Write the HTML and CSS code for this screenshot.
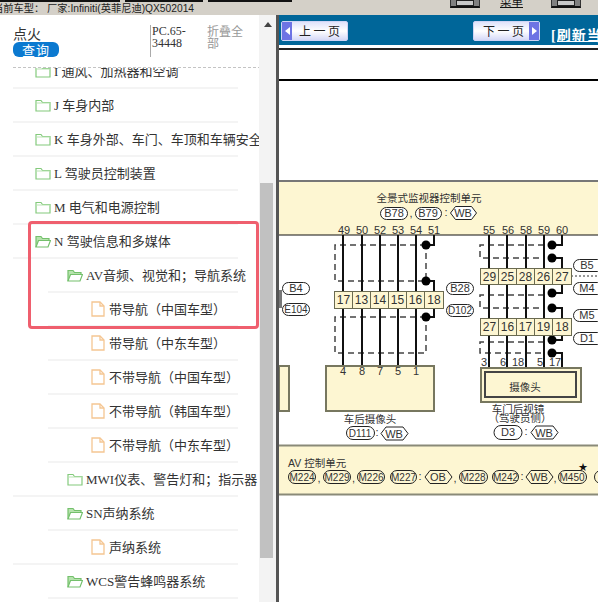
FILE: index.html
```html
<!DOCTYPE html>
<html lang="zh-CN">
<head>
    <meta charset="UTF-8">
    <meta name="viewport" content="width=device-width, initial-scale=1.0">
    <title>维修手册</title>
    <link rel="stylesheet" href="styles.css">
</head>
<body>
    <svg class="icon-defs" aria-hidden="true">
        <symbol id="folder-closed" viewBox="0 0 16 13">
            <path d="M1 12V1.500h5l1.500 2H15V12z" fill="#fff" stroke="#84ca7c" stroke-width="1.200"/>
            <path d="M1 4h14" stroke="#b9e3b2" stroke-width="1"/>
        </symbol>
        <symbol id="folder-open" viewBox="0 0 16 13">
            <path d="M1 12V1.500h5l1.500 2H14V6" fill="#b6e3ad" stroke="#74c06c" stroke-width="1.200"/>
            <path d="M1 12l2.500-6.500H15.500L13 12z" fill="#fff" stroke="#74c06c" stroke-width="1.200"/>
        </symbol>
        <symbol id="file" viewBox="0 0 14 16">
            <path d="M1 1h8l4 4v10H1z" fill="#fff" stroke="#f5c692" stroke-width="1.300"/>
            <path d="M9 1v4h4" fill="none" stroke="#f5c692" stroke-width="1.300"/>
        </symbol>
    </svg>

    <header class="toolbar">
        <div class="toolbar__left">
            <div class="toolbar__strips">
                <span class="strip strip--a"></span>
                <span class="strip strip--b"></span>
                <span class="strip strip--c"></span>
            </div>
            <div class="toolbar__status">当前车型： 厂家:Infiniti(英菲尼迪)QX502014</div>
        </div>
        <span class="tool-btn"></span>
        <span class="tool-label">菜单</span>
        <span class="tool-btn tool-btn--last"></span>
    </header>

    <main class="main">
        <aside class="sidebar">
            <div class="sidebar__content">
                <div class="search">
                    <div class="search__left">
                        <div class="search__name">点火</div>
                        <button class="search__btn">查询</button>
                    </div>
                    <div class="search__code">PC.65-34448</div>
                    <div class="search__fold">折叠全部</div>
                </div>
                <ul class="tree">
                    <li class="tree__row tree__row--l1"><svg class="tree__icon"><use href="#folder-closed"/></svg>I 通风、加热器和空调</li>
                    <li class="tree__row tree__row--l1"><svg class="tree__icon"><use href="#folder-closed"/></svg>J 车身内部</li>
                    <li class="tree__row tree__row--l1"><svg class="tree__icon"><use href="#folder-closed"/></svg>K 车身外部、车门、车顶和车辆安全</li>
                    <li class="tree__row tree__row--l1"><svg class="tree__icon"><use href="#folder-closed"/></svg>L 驾驶员控制装置</li>
                    <li class="tree__row tree__row--l1"><svg class="tree__icon"><use href="#folder-closed"/></svg>M 电气和电源控制</li>
                    <li class="tree__row tree__row--l1"><svg class="tree__icon"><use href="#folder-open"/></svg>N 驾驶信息和多媒体</li>
                    <li class="tree__row tree__row--l2 tree__row--short"><svg class="tree__icon"><use href="#folder-open"/></svg>AV音频、视觉和；导航系统</li>
                    <li class="tree__row tree__row--l3 tree__row--short"><svg class="tree__icon tree__icon--file"><use href="#file"/></svg>带导航（中国车型）</li>
                    <li class="tree__row tree__row--l3 tree__row--short"><svg class="tree__icon tree__icon--file"><use href="#file"/></svg>带导航（中东车型）</li>
                    <li class="tree__row tree__row--l3 tree__row--short"><svg class="tree__icon tree__icon--file"><use href="#file"/></svg>不带导航（中国车型）</li>
                    <li class="tree__row tree__row--l3 tree__row--short"><svg class="tree__icon tree__icon--file"><use href="#file"/></svg>不带导航（韩国车型）</li>
                    <li class="tree__row tree__row--l3 tree__row--short"><svg class="tree__icon tree__icon--file"><use href="#file"/></svg>不带导航（中东车型）</li>
                    <li class="tree__row tree__row--l2"><svg class="tree__icon"><use href="#folder-closed"/></svg>MWI仪表、警告灯和；指示器</li>
                    <li class="tree__row tree__row--l2 tree__row--short"><svg class="tree__icon"><use href="#folder-open"/></svg>SN声纳系统</li>
                    <li class="tree__row tree__row--l3"><svg class="tree__icon tree__icon--file"><use href="#file"/></svg>声纳系统</li>
                    <li class="tree__row tree__row--l2 tree__row--short"><svg class="tree__icon"><use href="#folder-open"/></svg>WCS警告蜂鸣器系统</li>
                </ul>
            </div>
            <div class="scrollbar">
                <span class="scrollbar__arrow"></span>
                <span class="scrollbar__thumb"></span>
            </div>
            <div class="highlight"></div>
        </aside>

        <section class="doc">
            <div class="doc__nav">
                <button class="page-btn page-btn--prev"><span class="page-btn__arrow page-btn__arrow--left"></span><span class="page-btn__text">上一页</span></button>
                <button class="page-btn page-btn--next"><span class="page-btn__text">下一页</span><span class="page-btn__arrow page-btn__arrow--right"></span></button>
                <a class="doc__refresh">[刷新当前页]</a>
            </div>
            <div class="doc__title"></div>

            <svg class="diagram" viewBox="279 81 319 521" width="319" height="521">
                <!-- 上部控制单元 -->
                <rect class="band" x="279" y="181" width="319" height="54"/>
                <path class="band-top" d="M279 181H598"/>
                <path class="band-line" d="M279 235H598"/>
                <text class="t t--cjk" x="429" y="202">全景式监视器控制单元</text>
                <rect class="pill" x="380.500" y="207.500" width="27" height="12" rx="6"/>
                <text class="t" x="394" y="217">B78</text>
                <text class="t" x="411" y="217">,</text>
                <rect class="pill" x="415.500" y="207.500" width="26" height="12" rx="6"/>
                <text class="t" x="428" y="217">B79</text>
                <text class="t" x="446" y="216">:</text>
                <path class="pill" d="M450.500 213l5-6.500h16l5 6.500-5 6.500h-16z"/>
                <text class="t" x="463" y="217">WB</text>

                <text class="t" x="344" y="234">49</text>
                <text class="t" x="362" y="234">50</text>
                <text class="t" x="380" y="234">52</text>
                <text class="t" x="398" y="234">53</text>
                <text class="t" x="416" y="234">54</text>
                <text class="t" x="434" y="234">51</text>
                <text class="t" x="489" y="234">55</text>
                <text class="t" x="508" y="234">56</text>
                <text class="t" x="526" y="234">58</text>
                <text class="t" x="544" y="234">59</text>
                <text class="t" x="562" y="234">60</text>

                <!-- 屏蔽虚线 -->
                <path class="dash" d="M426 245H335V281H426V245M426 317H335V353H426V317"/>
                <path class="dash" d="M544 245H480V258H544M544 295H480V308H544M544 342H480V353H544"/>
                <path class="dots" d="M571 276H598"/>

                <!-- 导线 -->
                <path class="wire" d="M343 235V366M362 235V366M380 235V366M398 235V366M416 235V366"/>
                <path class="wire" d="M489 235V372M507 235V372M526 235V372M544 235V372"/>
                <path class="wire" d="M434 235V245H426M426 281H434V291M434 308V317H426"/>
                <path class="wire" d="M562 235V245H552M552 258H562V268M562 284V293H552M552 308H562V318M562 335V340H552M552 353H562V372"/>
                <circle class="dot" cx="426" cy="245" r="4.500"/>
                <circle class="dot" cx="426" cy="281" r="4.500"/>
                <circle class="dot" cx="426" cy="317" r="4.500"/>
                <circle class="dot" cx="552" cy="245" r="4.500"/>
                <circle class="dot" cx="552" cy="258" r="4.500"/>
                <circle class="dot" cx="552" cy="293" r="4.500"/>
                <circle class="dot" cx="552" cy="308" r="4.500"/>
                <circle class="dot" cx="552" cy="340" r="4.500"/>
                <circle class="dot" cx="552" cy="353" r="4.500"/>

                <!-- 端子 -->
                <rect class="cell" x="334.500" y="291.500" width="18" height="17"/><text class="t t--num" x="343.500" y="304">17</text>
                <rect class="cell" x="352.500" y="291.500" width="18" height="17"/><text class="t t--num" x="361.500" y="304">13</text>
                <rect class="cell" x="370.500" y="291.500" width="18" height="17"/><text class="t t--num" x="379.500" y="304">14</text>
                <rect class="cell" x="388.500" y="291.500" width="18" height="17"/><text class="t t--num" x="397.500" y="304">15</text>
                <rect class="cell" x="406.500" y="291.500" width="18" height="17"/><text class="t t--num" x="415.500" y="304">16</text>
                <rect class="cell" x="424.500" y="291.500" width="19" height="17"/><text class="t t--num" x="434" y="304">18</text>

                <rect class="cell" x="480.500" y="268.500" width="18" height="16"/><text class="t t--num" x="489.500" y="281">29</text>
                <rect class="cell" x="498.500" y="268.500" width="18" height="16"/><text class="t t--num" x="507.500" y="281">25</text>
                <rect class="cell" x="516.500" y="268.500" width="18" height="16"/><text class="t t--num" x="525.500" y="281">28</text>
                <rect class="cell" x="534.500" y="268.500" width="18" height="16"/><text class="t t--num" x="543.500" y="281">26</text>
                <rect class="cell" x="552.500" y="268.500" width="19" height="16"/><text class="t t--num" x="562" y="281">27</text>

                <rect class="cell" x="480.500" y="318.500" width="18" height="17"/><text class="t t--num" x="489.500" y="331">27</text>
                <rect class="cell" x="498.500" y="318.500" width="18" height="17"/><text class="t t--num" x="507.500" y="331">16</text>
                <rect class="cell" x="516.500" y="318.500" width="18" height="17"/><text class="t t--num" x="525.500" y="331">17</text>
                <rect class="cell" x="534.500" y="318.500" width="18" height="17"/><text class="t t--num" x="543.500" y="331">19</text>
                <rect class="cell" x="552.500" y="318.500" width="19" height="17"/><text class="t t--num" x="562" y="331">18</text>

                <!-- 接头标签 -->
                <rect class="tab" x="279" y="290" width="3" height="18"/>
                <rect class="pill" x="282.500" y="282.500" width="27" height="12" rx="6"/><text class="t" x="296" y="292">B4</text>
                <rect class="pill" x="282.500" y="303.500" width="27" height="12" rx="6"/><text class="t t--tag" x="296" y="313">E104</text>
                <rect class="pill" x="446.500" y="282.500" width="27" height="12" rx="6"/><text class="t" x="460" y="292">B28</text>
                <rect class="pill" x="446.500" y="304.500" width="27" height="12" rx="6"/><text class="t t--tag" x="460" y="314">D102</text>
                <rect class="pill" x="573.500" y="259.500" width="30" height="12" rx="6"/><text class="t" x="587" y="269">B5</text>
                <rect class="pill" x="573.500" y="282.500" width="30" height="12" rx="6"/><text class="t" x="587" y="292">M4</text>
                <rect class="pill" x="573.500" y="309.500" width="30" height="12" rx="6"/><text class="t" x="587" y="319">M5</text>
                <rect class="pill" x="573.500" y="332.500" width="30" height="12" rx="6"/><text class="t" x="587" y="342">D1</text>

                <!-- 摄像头 -->
                <rect class="box" x="279" y="366" width="10" height="45"/>
                <rect class="box" x="326" y="366" width="108" height="45"/>
                <text class="t" x="343" y="375">4</text>
                <text class="t" x="362" y="375">8</text>
                <text class="t" x="380" y="375">7</text>
                <text class="t" x="398" y="375">5</text>
                <text class="t" x="416" y="375">1</text>
                <text class="t t--cjk" x="370" y="423">车后摄像头</text>
                <rect class="pill" x="346.500" y="426.500" width="28" height="13" rx="6.500"/>
                <text class="t t--tag" x="360" y="437">D111</text>
                <text class="t" x="377" y="436">:</text>
                <path class="pill" d="M381 433.500l5-6.500h17l5 6.500-5 6.500h-17z"/>
                <text class="t" x="394" y="438">WB</text>

                <rect class="box" x="481" y="368" width="100" height="34"/>
                <rect class="box box--inner" x="485" y="372" width="91" height="25"/>
                <text class="t" x="484" y="366">3</text>
                <text class="t" x="503" y="366">6</text>
                <text class="t" x="518" y="366">18</text>
                <text class="t" x="540" y="366">5</text>
                <text class="t" x="555" y="366">17</text>
                <text class="t t--cjk" x="525" y="391">摄像头</text>
                <text class="t t--cjk" x="518" y="413">车门后视镜</text>
                <text class="t t--cjk" x="520" y="422">（驾驶员侧）</text>
                <rect class="pill" x="494" y="425.500" width="28" height="14" rx="7"/>
                <text class="t" x="508" y="436">D3</text>
                <text class="t" x="526" y="435">:</text>
                <path class="pill" d="M531 432.500l5-6.500h17l5 6.500-5 6.500h-17z"/>
                <text class="t" x="544" y="437">WB</text>

                <!-- AV 控制单元 -->
                <rect class="band" x="279" y="445" width="319" height="50"/>
                <path class="band-edge" d="M279 445.500H598M279 494.500H598"/>
                <text class="t t--start" x="288" y="467">AV 控制单元</text>
                <rect class="pill pill--m" x="288.500" y="470.500" width="27" height="13" rx="6.500"/><text class="t t--tag" x="302" y="481">M224</text>
                <text class="t" x="319" y="482">,</text>
                <rect class="pill pill--m" x="323.500" y="470.500" width="27" height="13" rx="6.500"/><text class="t t--tag" x="337" y="481">M229</text>
                <text class="t" x="353.500" y="482">,</text>
                <rect class="pill pill--m" x="357.500" y="470.500" width="27" height="13" rx="6.500"/><text class="t t--tag" x="371" y="481">M226</text>
                <rect class="pill pill--m" x="390.500" y="470.500" width="26" height="13" rx="6.500"/><text class="t t--tag" x="403.500" y="481">M227</text>
                <text class="t" x="420" y="480">:</text>
                <path class="pill pill--m" d="M425 477l5-6.500h17l5 6.500-5 6.500h-17z"/>
                <text class="t" x="438" y="481">OB</text>
                <text class="t" x="455" y="482">,</text>
                <rect class="pill pill--m" x="459.500" y="470.500" width="28" height="13" rx="6.500"/><text class="t t--tag" x="473" y="481">M228</text>
                <rect class="pill pill--m" x="492.500" y="470.500" width="26" height="13" rx="6.500"/><text class="t t--tag" x="505.500" y="481">M242</text>
                <text class="t" x="522" y="480">:</text>
                <path class="pill pill--m" d="M526 477l5-6.500h17l5 6.500-5 6.500h-17z"/>
                <text class="t" x="539" y="481">WB</text>
                <text class="t" x="555" y="482">,</text>
                <rect class="pill pill--m" x="558.500" y="470.500" width="28" height="13" rx="6.500"/><text class="t t--tag" x="572" y="481">M450</text>
                <text class="t t--star" x="583" y="470">★</text>
                <rect class="pill pill--m" x="594.500" y="470.500" width="28" height="13" rx="6.500"/>
            </svg>
        </section>
    </main>
</body>
</html>
```

FILE: styles.css
```css
* {
    box-sizing: border-box;
}
body {
    margin: 0;
    height: 100vh;
    overflow: hidden;
    display: flex;
    flex-direction: column;
    font-family: "Liberation Serif", "Noto Sans CJK SC", serif;
    background-color: #fff;
    color: #333;
}
.icon-defs {
    display: none;
}

/* toolbar */
.toolbar {
    flex: none;
    height: 15px;
    display: flex;
    overflow: hidden;
    background-color: #d4d0c8;
}
.toolbar__left {
    width: 450px;
    flex: none;
    overflow: hidden;
}
.toolbar__strips {
    display: flex;
    gap: 5px;
    height: 2px;
}
.strip {
    background-color: #111;
}
.strip--a {
    width: 120px;
}
.strip--b {
    width: 78px;
}
.strip--c {
    width: 84px;
}
.toolbar__status {
    margin-left: -7px;
    font-family: "Liberation Sans", "Noto Sans CJK SC", sans-serif;
    font-size: 10.250px;
    line-height: 13px;
    white-space: nowrap;
    color: #222;
}
.tool-btn {
    flex: none;
    width: 30px;
    height: 8px;
    padding: 0 5px;
    background-color: #808080;
    border-bottom: 2px solid #111;
    border-left: 1px solid #333;
    border-right: 1px solid #333;
}
.tool-btn::before {
    content: "";
    display: block;
    height: 4px;
    border: 1px solid #222;
    background-color: #c8c8c8;
}
.tool-btn--last {
    margin-left: 28px;
}
.tool-label {
    flex: none;
    width: 23px;
    height: 7px;
    margin-left: 20px;
    display: flex;
    align-items: flex-end;
    font-family: "Noto Sans CJK SC", sans-serif;
    font-size: 11.500px;
    line-height: 11px;
    text-decoration: underline;
    color: #111;
}

.main {
    flex: 1;
    min-height: 0;
    display: flex;
}

/* sidebar */
.sidebar {
    position: relative;
    flex: none;
    width: 279px;
    display: flex;
    background-color: #fff;
    border-right: 3px solid #555;
}
.sidebar__content {
    width: 259px;
    flex: none;
    overflow: hidden;
}
.search {
    position: relative;
    z-index: 1;
    height: 53px;
    margin-left: 13px;
    margin-right: -7px;
    padding-top: 10px;
    display: flex;
    background-color: #fff;
    border-bottom: 1px dashed #c4c4c4;
}
.search__left {
    width: 137px;
    flex: none;
}
.search__name {
    height: 17px;
    font-family: "Noto Sans CJK SC", sans-serif;
    font-size: 14px;
    line-height: 17px;
    color: #333;
}
.search__btn {
    display: block;
    width: 46px;
    height: 15px;
    padding: 0;
    border: 0;
    border-radius: 6px;
    background-color: #0b79d0;
    color: #fff;
    font-family: "Noto Sans CJK SC", sans-serif;
    font-size: 13px;
    line-height: 15px;
    letter-spacing: 1px;
}
.search__code {
    width: 57px;
    height: 32px;
    flex: none;
    padding-left: 1px;
    border-left: 1px solid #aaa;
    font-size: 12px;
    line-height: 12px;
    color: #333;
    word-break: break-word;
}
.search__fold {
    width: 37px;
    font-family: "Noto Sans CJK SC", sans-serif;
    font-size: 12px;
    line-height: 12px;
    color: #999;
}
.tree {
    list-style: none;
    margin: -13px 0 0;
    padding: 0;
}
.tree__row {
    --rule: 13px;
    height: 34px;
    margin-left: var(--rule);
    margin-right: 21px;
    padding-left: calc(var(--indent) - var(--rule));
    padding-bottom: 2px;
    display: flex;
    align-items: center;
    border-bottom: 2px solid #f4f4f4;
    font-size: 13px;
    white-space: nowrap;
}
.tree__row--l1 {
    --indent: 35px;
}
.tree__row--l2 {
    --indent: 67px;
}
.tree__row--l3 {
    --indent: 91px;
}
.tree__row--short {
    --rule: 48px;
}
.tree__icon {
    width: 16px;
    height: 13px;
    flex: none;
    margin-top: 2px;
    margin-right: 3px;
}
.tree__icon--file {
    width: 14px;
    height: 16px;
    margin-right: 4px;
}
.highlight {
    position: absolute;
    left: 28px;
    top: 206px;
    width: 231px;
    height: 108px;
    border: 3px solid #ef5f6e;
    border-radius: 4px;
}
.scrollbar {
    width: 17px;
    flex: none;
    padding: 0 1px;
    background-color: #f3f3f3;
}
.scrollbar__arrow {
    display: block;
    width: 0;
    margin: 7px auto 0;
    border-left: 4px solid transparent;
    border-right: 4px solid transparent;
    border-bottom: 5px solid #444;
}
.scrollbar__thumb {
    display: block;
    width: 13px;
    height: 375px;
    margin-top: 156px;
    background-color: #c1c1c1;
}

/* document */
.doc {
    flex: 1;
    min-width: 0;
    overflow: hidden;
}
.doc__nav {
    height: 30px;
    padding: 6px 0 0 2px;
    display: flex;
    align-items: flex-start;
    background-color: #006699;
    white-space: nowrap;
}
.page-btn {
    flex: none;
    width: 67px;
    height: 20px;
    padding: 0;
    display: flex;
    align-items: stretch;
    border: 1px solid #cfd4f5;
    border-radius: 2px;
    background: linear-gradient(#dfe2fa, #fff 50%, #d5d9f7);
    font-family: "Noto Sans CJK SC", sans-serif;
    font-size: 12px;
    line-height: 17px;
    color: #222;
}
.page-btn--prev .page-btn__text {
    padding-left: 7px;
}
.page-btn--next {
    margin-left: 125px;
}
.page-btn--next .page-btn__text {
    padding-left: 9px;
}
.page-btn__text {
    flex: 1;
    letter-spacing: 2.500px;
    text-align: left;
}
.page-btn__arrow {
    width: 10px;
    flex: none;
    display: flex;
    align-items: center;
    justify-content: center;
    background-color: #6d73e4;
}
.page-btn__arrow::before {
    content: "";
    border-top: 4px solid transparent;
    border-bottom: 4px solid transparent;
}
.page-btn__arrow--left::before {
    border-right: 5px solid #fff;
}
.page-btn__arrow--right::before {
    border-left: 5px solid #fff;
}
.doc__refresh {
    flex: none;
    margin: 3px 0 0 11px;
    font-size: 14px;
    font-weight: bold;
    color: #fff;
    text-decoration: underline;
    letter-spacing: 1px;
}
.doc__title {
    height: 33px;
    margin-top: 3px;
    border-top: 2px solid #222;
    border-bottom: 2px solid #000;
}
.diagram {
    display: block;
}

/* diagram parts */
.band,
.cell,
.box {
    fill: #fdf6d2;
}
.band-top {
    stroke: #777;
    stroke-width: 2;
}
.band-line {
    stroke: #111;
    stroke-width: 1;
}
.band-edge {
    fill: none;
    stroke: #8a8a78;
    stroke-width: 2;
}
.t {
    font-family: "Liberation Sans", "Noto Sans CJK SC", sans-serif;
    font-size: 11px;
    fill: #333;
    text-anchor: middle;
}
.t--cjk {
    font-size: 10.500px;
}
.t--num {
    font-size: 12px;
}
.t--tag {
    font-size: 10px;
}
.t--start {
    text-anchor: start;
    font-size: 10.500px;
}
.t--star {
    font-size: 9px;
    fill: #111;
}
.pill {
    fill: #fff;
    stroke: #222;
    stroke-width: 1;
}
.pill--m {
    fill: #fdf6d2;
}
.dash {
    fill: none;
    stroke: #444;
    stroke-width: 1.500;
    stroke-dasharray: 6 4;
}
.dots {
    stroke: #333;
    stroke-width: 1;
    stroke-dasharray: 2 2;
}
.wire {
    fill: none;
    stroke: #111;
    stroke-width: 2;
}
.dot {
    fill: #000;
}
.cell {
    stroke: #6a6a50;
    stroke-width: 1;
}
.tab {
    fill: #777;
}
.box {
    stroke: #77775f;
    stroke-width: 2;
}
.box--inner {
    stroke: #444;
}
```
